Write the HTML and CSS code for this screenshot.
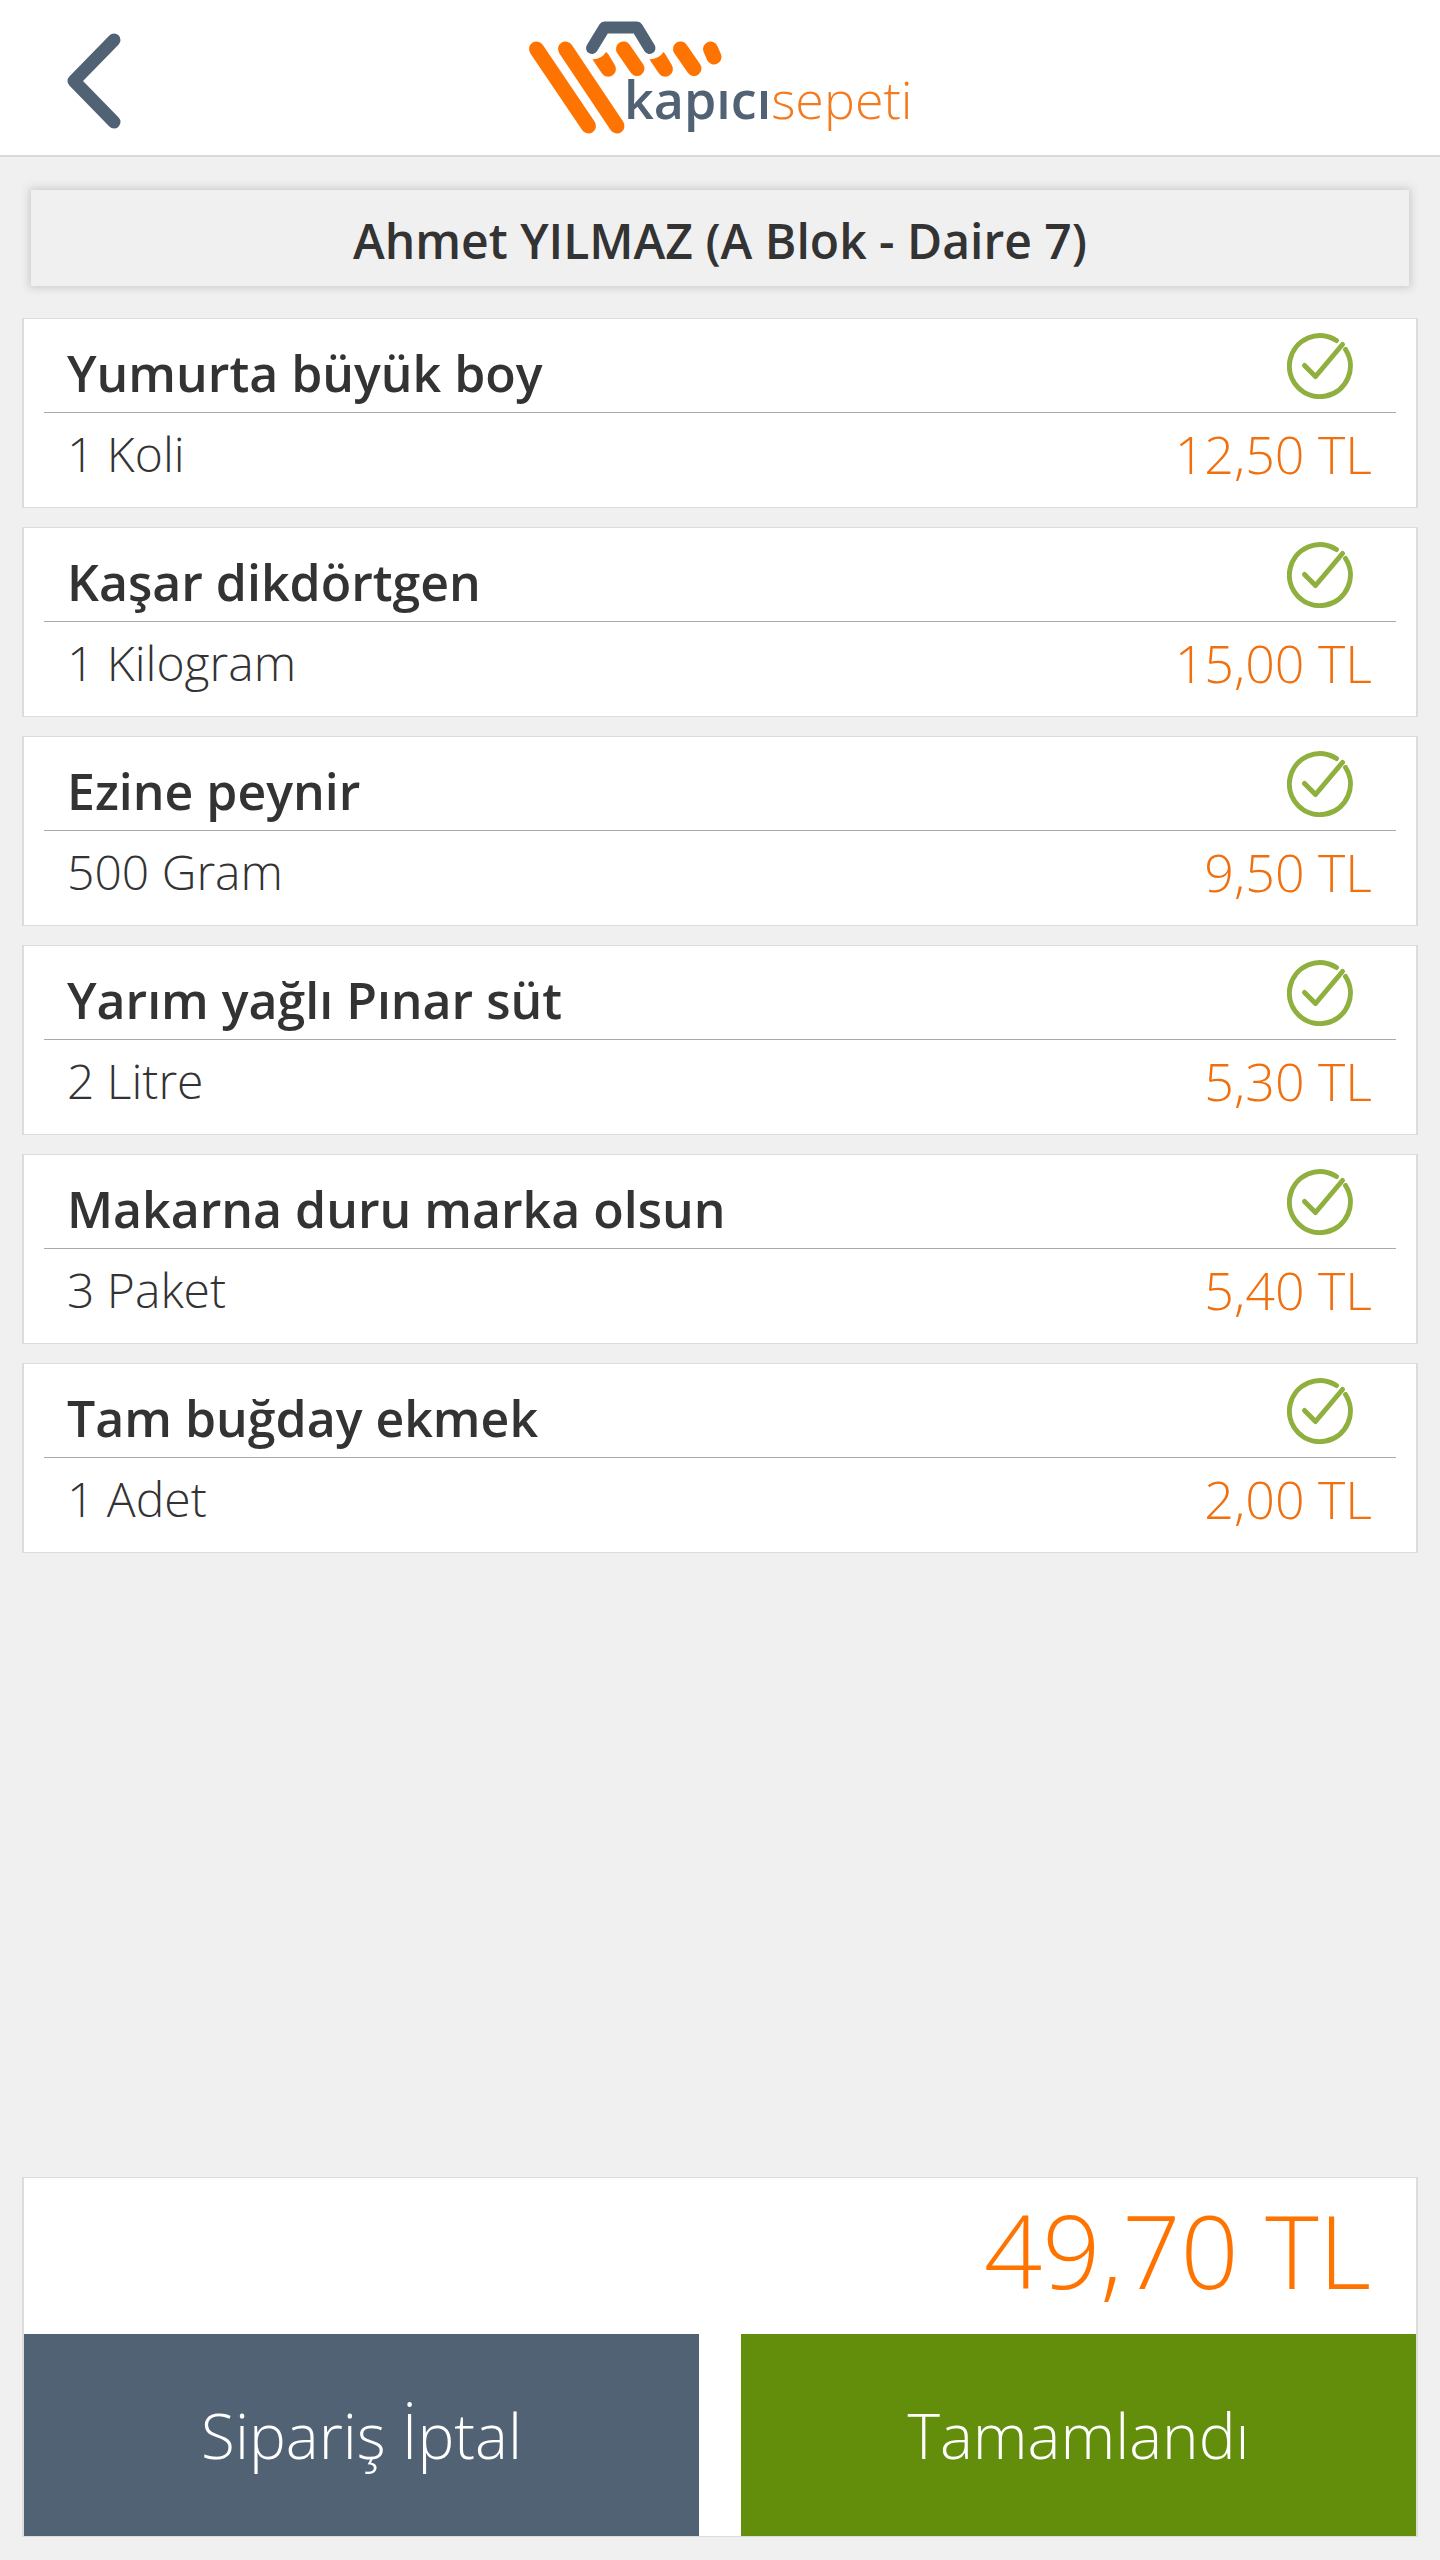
FILE: index.html
```html
<!DOCTYPE html>
<html lang="tr">
<head>
<meta charset="utf-8">
<meta name="viewport" content="width=device-width, initial-scale=1">
<title>kapıcısepeti</title>
<link rel="stylesheet" href="styles.css">
</head>
<body>
<svg class="sprite" aria-hidden="true">
  <symbol id="check" viewBox="0 0 66 66">
    <path d="M49.5 7.5A30.5 30.5 0 1 0 58.500 16.500" fill="none" stroke="#8fb03e" stroke-width="5" stroke-linecap="round"/>
    <path d="M17.500 32.500L28.500 43.500L55.500 11.500" fill="none" stroke="#8fb03e" stroke-width="5" stroke-linecap="round" stroke-linejoin="round"/>
  </symbol>
</svg>
<header class="topbar">
  <button class="back" type="button" aria-label="Geri">
    <svg class="back-icon" viewBox="0 0 54 96"><path d="M47 7L7 48L47 89" fill="none" stroke="#516274" stroke-width="13" stroke-linecap="round" stroke-linejoin="round"/></svg>
  </button>
  <svg class="logo" viewBox="0 0 440 155" role="img" aria-label="kapıcısepeti">
    <g fill="none" stroke="#ff7300" stroke-width="15" stroke-linecap="round">
      <path d="M36.500 49L88.500 126"/>
      <path d="M65.500 49L117 126"/>
      <path d="M123.500 49L137 68.500"/>
      <path d="M180.500 49L194 68.500"/>
      <path d="M210.500 49L214 57"/>
    </g>
    <path d="M92.500 59.500Q102 59 106 52Q109 54 110 57L114.500 64.500A7.500 7.500 0 0 1 102 73.500Z" fill="#ff7300"/>
    <path d="M149.500 59.500Q159 59 163.500 52Q165.500 54 167 57L171.500 64.500A7.500 7.500 0 0 1 159 73.500Z" fill="#ff7300"/>
    <path d="M92 48L104.500 27.500H137L149.500 48" fill="none" stroke="#516274" stroke-width="12" stroke-linecap="round" stroke-linejoin="round"/>
    <text class="logo-name" x="124" y="119">kapıcı<tspan class="logo-accent">sepeti</tspan></text>
  </svg>
</header>
<main class="order">
  <h1 class="customer">Ahmet YILMAZ (A Blok - Daire 7)</h1>
  <ul class="items">
    <li class="item">
      <div class="item-head"><h2 class="item-name">Yumurta büyük boy</h2><svg class="check"><use href="#check"/></svg></div>
      <div class="item-body"><span>1 Koli</span><span class="price">12,50 TL</span></div>
    </li>
    <li class="item">
      <div class="item-head"><h2 class="item-name">Kaşar dikdörtgen</h2><svg class="check"><use href="#check"/></svg></div>
      <div class="item-body"><span>1 Kilogram</span><span class="price">15,00 TL</span></div>
    </li>
    <li class="item">
      <div class="item-head"><h2 class="item-name">Ezine peynir</h2><svg class="check"><use href="#check"/></svg></div>
      <div class="item-body"><span>500 Gram</span><span class="price">9,50 TL</span></div>
    </li>
    <li class="item">
      <div class="item-head"><h2 class="item-name">Yarım yağlı Pınar süt</h2><svg class="check"><use href="#check"/></svg></div>
      <div class="item-body"><span>2 Litre</span><span class="price">5,30 TL</span></div>
    </li>
    <li class="item">
      <div class="item-head"><h2 class="item-name">Makarna duru marka olsun</h2><svg class="check"><use href="#check"/></svg></div>
      <div class="item-body"><span>3 Paket</span><span class="price">5,40 TL</span></div>
    </li>
    <li class="item">
      <div class="item-head"><h2 class="item-name">Tam buğday ekmek</h2><svg class="check"><use href="#check"/></svg></div>
      <div class="item-body"><span>1 Adet</span><span class="price">2,00 TL</span></div>
    </li>
  </ul>
  <section class="summary">
    <p class="total">49,70 TL</p>
    <div class="actions">
      <button class="action cancel" type="button">Sipariş İptal</button>
      <button class="action done" type="button">Tamamlandı</button>
    </div>
  </section>
</main>
</body>
</html>
```
FILE: styles.css
```css
* { box-sizing: border-box; margin: 0; padding: 0; }

body {
  display: flex;
  flex-direction: column;
  min-height: 100vh;
  background: #f0f0f0;
  color: #333;
  font-family: "Open Sans", "Noto Sans", sans-serif;
}

.sprite { display: none; }

.topbar {
  display: grid;
  grid-template-columns: 1fr auto 1fr;
  align-items: center;
  background: #fff;
  border-bottom: 2px solid #d9d9d9;
}
.back {
  justify-self: start;
  margin-left: 67px;
  padding-top: 6px;
  border: 0;
  background: none;
  cursor: pointer;
}
.back-icon { display: block; width: 54px; height: 96px; }
.logo { display: block; width: 440px; height: 155px; }
.logo-name { font-size: 52px; font-weight: 600; fill: #516274; }
.logo-accent { font-weight: 300; fill: #f47a20; }

.order {
  flex: 1;
  display: flex;
  flex-direction: column;
  padding: 33px 22px 23px;
}
.customer {
  margin: 0 9px 32px;
  padding-top: 6px;
  font-size: 48px;
  font-weight: 600;
  line-height: 90px;
  text-align: center;
  box-shadow: 0 0 8px 2px #ccc;
}

.items { display: grid; gap: 19px; margin-bottom: 19px; list-style: none; }
.item, .summary {
  background: #fff;
  border: solid #dcdcdc;
  border-width: 1px 2px;
}
.item { padding: 0 20px; }
.item-head {
  display: flex;
  align-items: center;
  justify-content: space-between;
  padding: 0 43px 0 23px;
  border-bottom: 1px solid #aaa;
}
.item-name {
  padding-top: 16px;
  font-size: 50px;
  font-weight: 600;
  line-height: 77px;
}
.check { flex: none; width: 66px; height: 66px; }
.item-body {
  display: flex;
  justify-content: space-between;
  padding: 0 24px 12px 23px;
  font-size: 48px;
  font-weight: 300;
  line-height: 82px;
}
.price { color: #f07010; font-size: 52px; }

.summary { margin-top: auto; }
.total {
  padding: 0 45px 12px;
  color: #ff7300;
  font-size: 102px;
  font-weight: 300;
  line-height: 144px;
  text-align: right;
}
.actions { display: grid; grid-template-columns: 1fr 1fr; gap: 42px; }
.action {
  border: 0;
  color: #fff;
  font-family: inherit;
  font-size: 62px;
  font-weight: 300;
  line-height: 202px;
  cursor: pointer;
}
.cancel { background: #516274; }
.done { background: #628e0c; }
```
